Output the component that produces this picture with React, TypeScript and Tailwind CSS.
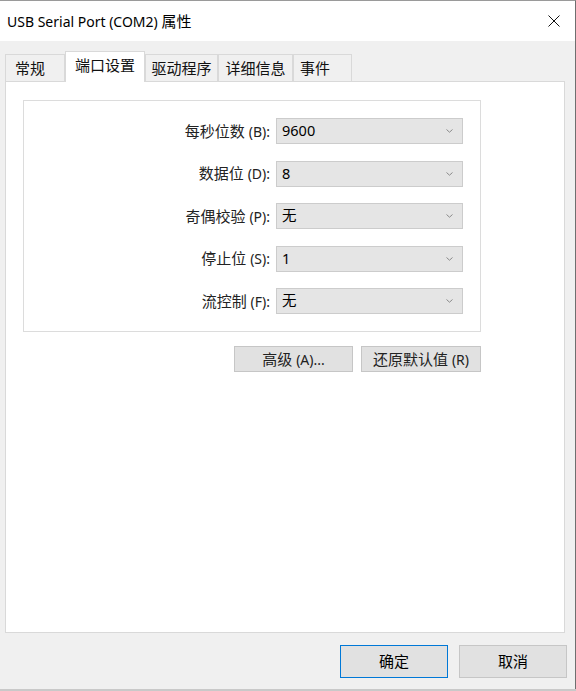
import React from 'react';

const font = { fontFamily: '"Noto Sans", "Noto Sans CJK SC", sans-serif' };

const rows = [
  { label: '每秒位数', key: '(B):', value: '9600' },
  { label: '数据位', key: '(D):', value: '8' },
  { label: '奇偶校验', key: '(P):', value: '无' },
  { label: '停止位', key: '(S):', value: '1' },
  { label: '流控制', key: '(F):', value: '无' },
];

const Chevron = () => (
  <svg width="7" height="4" viewBox="0 0 7 4" className="shrink-0">
    <path d="M0.5 0.5L3.5 3.2L6.5 0.5" stroke="#8a8a8a" strokeWidth="1" fill="none" />
  </svg>
);

const Combo = ({ value }: { value: string }) => (
  <div className="flex h-[26px] w-[187px] items-center justify-between border border-[#cccccc] bg-[#e5e5e5] pl-[5px] pr-[9px] text-[14.5px] text-black">
    <span>{value}</span>
    <Chevron />
  </div>
);

const Tab = ({ label, active, cls }: { label: string; active?: boolean; cls: string }) =>
  active ? (
    <div className={`relative z-10 mb-[-1px] flex h-[31px] items-start border border-b-0 border-[#d9d9d9] bg-white pt-[2px] text-[15px] ${cls}`}>
      {label}
    </div>
  ) : (
    <div className={`flex h-[27px] items-center border border-b-0 border-[#d9d9d9] bg-[#f0f0f0] text-[15px] ${cls}`}>
      {label}
    </div>
  );

export default function App() {
  return (
    <div className="h-[691px] w-[576px] bg-[#c9c9c9] text-[#111]" style={font}>
      <div className="flex h-[689px] w-[576px] flex-col border-r border-t border-r-[#6f6f6f] border-t-[#9a9a9a] bg-[#f0f0f0]">
        {/* Title bar */}
        <div className="flex h-[40px] items-center justify-between bg-white pl-[7px] pr-[15px]">
          <span className="text-[14px] text-black">USB Serial Port (COM2) <span className="text-[15px]">属性</span></span>
          <svg width="12" height="12" viewBox="0 0 12 12">
            <path d="M0.5 0.5L11.5 11.5M11.5 0.5L0.5 11.5" stroke="#111" strokeWidth="1" />
          </svg>
        </div>

        {/* Tabs */}
        <div className="flex h-[40px] items-end pl-[5px]">
          <Tab label="常规" cls="w-[60px] pl-[9px]" />
          <Tab label="端口设置" active cls="w-[80px] justify-center" />
          <Tab label="驱动程序" cls="w-[73px] justify-center" />
          <Tab label="详细信息" cls="w-[75px] justify-center" />
          <Tab label="事件" cls="w-[59px] pl-[6px]" />
        </div>

        {/* Panel */}
        <div className="ml-[5px] h-[552px] w-[560px] border border-[#d9d9d9] bg-white pl-[17px] pt-[18px]">
          <div className="flex w-[458px] flex-col gap-[16.5px] border border-[#dcdcdc] py-[17px] pr-[17px]">
            {rows.map((r) => (
              <div key={r.key} className="flex items-center justify-end gap-[6px]">
                <span className="text-[15px] text-[#222]">
                  {r.label} <span className="text-[14px]">{r.key}</span>
                </span>
                <Combo value={r.value} />
              </div>
            ))}
          </div>
          <div className="mt-[14px] flex w-[458px] justify-end gap-[8px]">
            <button className="h-[26px] w-[119px] border border-[#c6c6c6] bg-[#e1e1e1] text-[15px] text-[#222]">
              高级 <span className="text-[14px]">(A)...</span>
            </button>
            <button className="h-[26px] w-[120px] border border-[#c6c6c6] bg-[#e1e1e1] text-[15px] text-[#222]">
              还原默认值 <span className="text-[14px]">(R)</span>
            </button>
          </div>
        </div>

        {/* Footer buttons */}
        <div className="flex justify-end gap-[11px] pr-[8px] pt-[12px]">
          <button className="h-[33px] w-[108px] border border-[#0078d7] bg-[#e1e1e1] text-[15px] text-black">
            确定
          </button>
          <button className="h-[33px] w-[108px] border border-[#c6c6c6] bg-[#e1e1e1] text-[15px] text-black">
            取消
          </button>
        </div>
      </div>
    </div>
  );
}
